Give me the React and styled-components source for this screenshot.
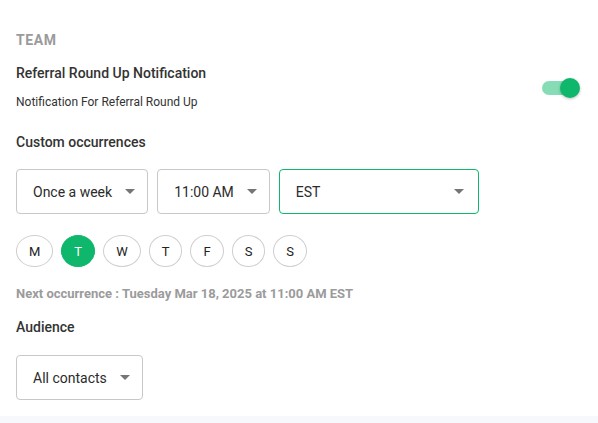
import styled, { createGlobalStyle } from "styled-components";
import { useState } from "react";

const GlobalStyle = createGlobalStyle`
  html, body {
    margin: 0;
    padding: 0;
    background: #ffffff;
  }
  body {
    font-family: Roboto, "Liberation Sans", Arial, sans-serif;
    color: #333333;
  }
`;

const GREEN = "#0fb76c";

const Page = styled.div`
  width: 598px;
  height: 423px;
  display: flex;
  flex-direction: column;
  background: #f7f8fc;
`;

const Panel = styled.div`
  background: #ffffff;
  padding: 30px 18px 16px 16px;
  display: flex;
  flex-direction: column;
`;

const Section = styled.div`
  font-size: 14px;
  line-height: 20px;
  font-weight: 700;
  letter-spacing: 0.6px;
  color: #9b9b9b;
`;

const HeaderRow = styled.div`
  display: flex;
  align-items: center;
  justify-content: space-between;
  margin-top: 13px;
`;

const TextCol = styled.div`
  display: flex;
  flex-direction: column;
`;

const Label = styled.div`
  font-size: 14px;
  line-height: 20px;
  font-weight: 500;
  color: #333333;
  margin-top: ${(p) => p.$mt || 0}px;
`;

const Sub = styled.div`
  font-size: 12px;
  line-height: 16px;
  color: #333333;
  margin-top: 11px;
`;

const Switch = styled.button`
  position: relative;
  width: 38px;
  height: 20px;
  padding: 0;
  border: 0;
  background: transparent;
  cursor: pointer;
  margin-top: 3px;

  &::before {
    content: "";
    position: absolute;
    left: 0;
    top: 3px;
    width: 34px;
    height: 14px;
    border-radius: 7px;
    background: ${(p) => (p.$on ? "#86ddb5" : "#c4c4c4")};
  }

  &::after {
    content: "";
    position: absolute;
    top: 0;
    left: ${(p) => (p.$on ? "18px" : "0")};
    width: 20px;
    height: 20px;
    border-radius: 50%;
    background: ${(p) => (p.$on ? GREEN : "#fafafa")};
    box-shadow: 0 1px 3px rgba(0, 0, 0, 0.25);
  }
`;

const SelectRow = styled.div`
  display: flex;
  gap: 9px;
  margin-top: 17px;
`;

const Select = styled.div`
  box-sizing: border-box;
  height: 45px;
  width: ${(p) => (p.$width ? `${p.$width}px` : "auto")};
  display: flex;
  align-items: center;
  justify-content: space-between;
  gap: 13px;
  padding: 0 ${(p) => (p.$width ? 14 : 12)}px 0 16px;
  border: 1px solid ${(p) => (p.$focused ? GREEN : "#c8c8c8")};
  border-radius: 4px;
  font-size: 14px;
  color: #2b2b2b;
  background: #fff;
`;

const Caret = () => (
  <svg width="10" height="5" viewBox="0 0 10 5">
    <path d="M0 0 L5 5 L10 0 Z" fill="#757575" />
  </svg>
);

const Days = styled.div`
  display: flex;
  gap: 8px;
  margin-top: 21px;
`;

const Day = styled.button`
  box-sizing: border-box;
  height: 32px;
  min-width: 32px;
  padding: 0 12px;
  border-radius: 50%;
  border: 1px solid ${(p) => (p.$active ? GREEN : "#cfcfcf")};
  background: ${(p) => (p.$active ? GREEN : "#fff")};
  color: ${(p) => (p.$active ? "#fff" : "#222")};
  font-family: inherit;
  font-size: 13px;
  cursor: pointer;
`;

const Next = styled.div`
  font-size: 13px;
  line-height: 16px;
  font-weight: 700;
  color: #9b9b9b;
  margin-top: 19px;
`;

const Single = styled.div`
  display: flex;
  margin-top: 18px;
`;

const days = ["M", "T", "W", "T", "F", "S", "S"];

export default function App() {
  const [on, setOn] = useState(true);
  const [active, setActive] = useState(1);

  return (
    <Page>
      <GlobalStyle />
      <Panel>
        <Section>TEAM</Section>
        <HeaderRow>
          <TextCol>
            <Label>Referral Round Up Notification</Label>
            <Sub>Notification For Referral Round Up</Sub>
          </TextCol>
          <Switch $on={on} onClick={() => setOn(!on)} aria-label="toggle" />
        </HeaderRow>

        <Label $mt={22}>Custom occurrences</Label>
        <SelectRow>
          <Select>
            Once a week
            <Caret />
          </Select>
          <Select>
            11:00 AM
            <Caret />
          </Select>
          <Select $width={200} $focused>
            EST
            <Caret />
          </Select>
        </SelectRow>

        <Days>
          {days.map((d, i) => (
            <Day key={i} $active={i === active} onClick={() => setActive(i)}>
              {d}
            </Day>
          ))}
        </Days>

        <Next>Next occurrence : Tuesday Mar 18, 2025 at 11:00 AM EST</Next>

        <Label $mt={15}>Audience</Label>
        <Single>
          <Select>
            All contacts
            <Caret />
          </Select>
        </Single>
      </Panel>
    </Page>
  );
}
